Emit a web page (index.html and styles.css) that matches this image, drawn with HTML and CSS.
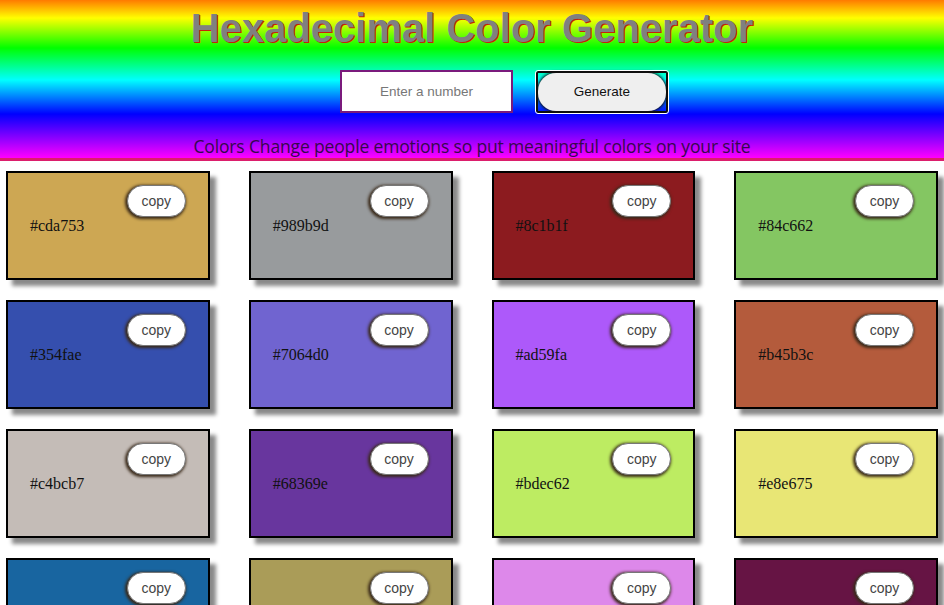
FILE: index.html
```html
<!DOCTYPE html>
<html>
<head>
<meta charset="utf-8">
<link rel="stylesheet" href="styles.css">
</head>
<body>
<header class="hero">
  <h1 class="title">Hexadecimal Color Generator</h1>
  <div class="controls">
    <input class="num-input" type="text" placeholder="Enter a number">
    <button class="gen-btn"><span class="gen-pill">Generate</span></button>
  </div>
  <p class="tagline">Colors Change people emotions so put meaningful colors on your site</p>
</header>
<main class="grid">
  <div class="card c1"><button class="copy">copy</button><span class="hex">#cda753</span></div>
  <div class="card c2"><button class="copy">copy</button><span class="hex">#989b9d</span></div>
  <div class="card c3"><button class="copy">copy</button><span class="hex">#8c1b1f</span></div>
  <div class="card c4"><button class="copy">copy</button><span class="hex">#84c662</span></div>
  <div class="card c5"><button class="copy">copy</button><span class="hex">#354fae</span></div>
  <div class="card c6"><button class="copy">copy</button><span class="hex">#7064d0</span></div>
  <div class="card c7"><button class="copy">copy</button><span class="hex">#ad59fa</span></div>
  <div class="card c8"><button class="copy">copy</button><span class="hex">#b45b3c</span></div>
  <div class="card c9"><button class="copy">copy</button><span class="hex">#c4bcb7</span></div>
  <div class="card c10"><button class="copy">copy</button><span class="hex">#68369e</span></div>
  <div class="card c11"><button class="copy">copy</button><span class="hex">#bdec62</span></div>
  <div class="card c12"><button class="copy">copy</button><span class="hex">#e8e675</span></div>
  <div class="card c13"><button class="copy">copy</button><span class="hex">#1865a0</span></div>
  <div class="card c14"><button class="copy">copy</button><span class="hex">#aa9c58</span></div>
  <div class="card c15"><button class="copy">copy</button><span class="hex">#dd88ea</span></div>
  <div class="card c16"><button class="copy">copy</button><span class="hex">#661444</span></div>
</main>
</body>
</html>
```
FILE: styles.css
```css
html, body {
  margin: 0;
  padding: 0;
  background: #fff;
}
body {
  font-family: "Liberation Sans", Arial, sans-serif;
}
.hero {
  height: 158px;
  border-bottom: 3px solid #dc1e6c;
  background: linear-gradient(to bottom, #ff7a00 0px, #ffff00 18px, #00ff00 48px, #00ffff 80px, #0000ff 114px, #8000ff 136px, #ff00ff 158px);
  display: flex;
  flex-direction: column;
  align-items: center;
}
.title {
  margin: 7px 0 0;
  font-family: "Liberation Sans", Arial, sans-serif;
  font-weight: bold;
  font-size: 40px;
  line-height: 42px;
  color: #808080;
  text-shadow: 1px 1px 0 #c8200a;
}
.controls {
  display: flex;
  align-items: center;
  gap: 23px;
  margin: 21px 0 0 64px;
}
.num-input {
  box-sizing: border-box;
  width: 173px;
  height: 43px;
  border: 2px solid #7a1a7c;
  background: #fff;
  text-align: center;
  font-family: "Liberation Sans", Arial, sans-serif;
  font-size: 13.5px;
  padding: 0;
  outline: none;
}
.num-input::placeholder {
  color: #777;
}
.gen-btn {
  box-sizing: border-box;
  width: 132px;
  height: 42px;
  padding: 0;
  border: 2px solid #0c0c0c;
  border-radius: 2px;
  outline: 1px solid #ffffff;
  background: transparent;
  display: flex;
  align-items: stretch;
}
.gen-pill {
  flex: 1;
  display: flex;
  align-items: center;
  justify-content: center;
  background: #efefef;
  border-radius: 18px;
  box-shadow: 0 0 3px 1px #111;
  font-family: "Liberation Sans", Arial, sans-serif;
  font-size: 13.5px;
  color: #111;
}
.tagline {
  margin: 22px 0 0;
  font-family: "Open Sans", sans-serif;
  font-size: 17.5px;
  line-height: 22px;
  color: #36084e;
  letter-spacing: -0.15px;
}
.grid {
  display: grid;
  grid-template-columns: repeat(4, 1fr);
  column-gap: 39px;
  row-gap: 20px;
  padding: 10px 6px 30px;
}
.card {
  box-sizing: border-box;
  height: 109px;
  border: 2px solid #000;
  box-shadow: 6px 6px 4px #8a8a8a;
  display: flex;
  flex-direction: column;
  align-items: flex-start;
}
.copy {
  align-self: flex-end;
  margin: 12px 22px 0 0;
  box-sizing: border-box;
  width: 59px;
  height: 32px;
  border: 1px solid #777;
  border-radius: 16px;
  background: #fff;
  box-shadow: -1px 1px 3px 1px #3a2a1a;
  font-family: "Liberation Sans", Arial, sans-serif;
  font-size: 14px;
  color: #444;
  padding: 0;
}
.hex {
  margin-left: 22px;
  font-family: "Liberation Serif", "Times New Roman", serif;
  font-size: 16px;
  line-height: 18px;
  color: #111;
}
.c1 { background: #cda753; }
.c2 { background: #989b9d; }
.c3 { background: #8c1b1f; }
.c4 { background: #84c662; }
.c5 { background: #354fae; }
.c6 { background: #7064d0; }
.c7 { background: #ad59fa; }
.c8 { background: #b45b3c; }
.c9 { background: #c4bcb7; }
.c10 { background: #68369e; }
.c11 { background: #bdec62; }
.c12 { background: #e8e675; }
.c13 { background: #1865a0; }
.c14 { background: #aa9c58; }
.c15 { background: #dd88ea; }
.c16 { background: #661444; }
```
